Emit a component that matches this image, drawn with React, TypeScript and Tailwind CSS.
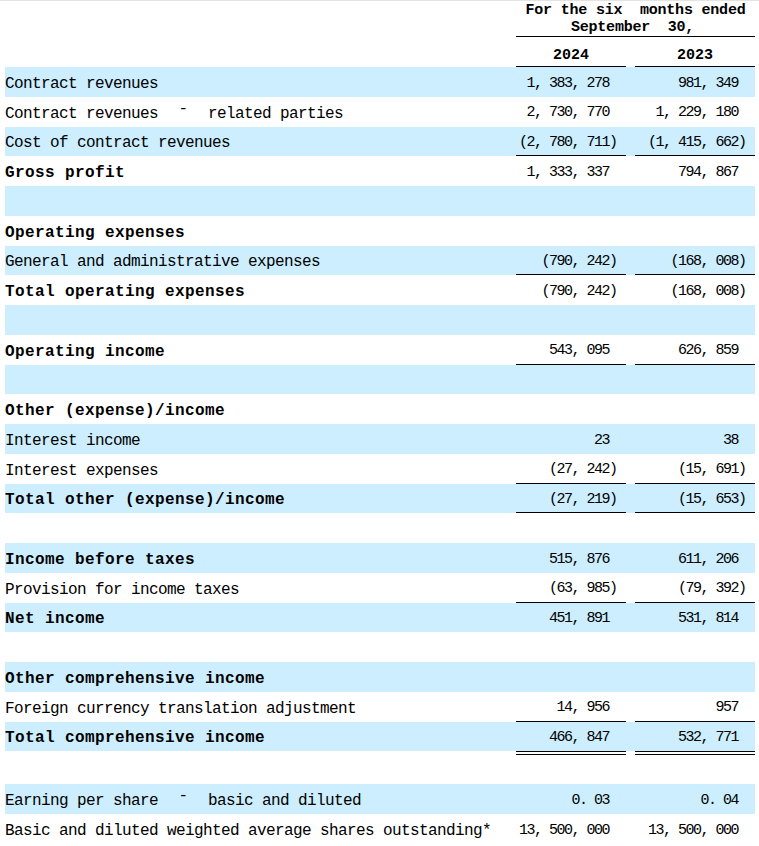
import * as React from "react";

type Row = {
    label?: string;
    bold?: boolean;
    dash?: [string, string];
    a?: string;
    b?: string;
    blue?: boolean;
    line?: "single" | "double";
    h?: string;
};

const rows: Row[] = [
    { label: "Contract revenues", a: "1, 383, 278", b: "981, 349", blue: true },
    { dash: ["Contract revenues", "related parties"], a: "2, 730, 770", b: "1, 229, 180" },
    { label: "Cost of contract revenues", a: "(2, 780, 711)", b: "(1, 415, 662)", blue: true, line: "single" },
    { label: "Gross profit", bold: true, a: "1, 333, 337", b: "794, 867" },
    { blue: true },
    { label: "Operating expenses", bold: true },
    { label: "General and administrative expenses", a: "(790, 242)", b: "(168, 008)", blue: true, line: "single" },
    { label: "Total operating expenses", bold: true, a: "(790, 242)", b: "(168, 008)" },
    { blue: true },
    { label: "Operating income", bold: true, a: "543, 095", b: "626, 859", line: "single" },
    { blue: true },
    { label: "Other (expense)/income", bold: true },
    { label: "Interest income", a: "23", b: "38", blue: true },
    { label: "Interest expenses", a: "(27, 242)", b: "(15, 691)", line: "single" },
    { label: "Total other (expense)/income", bold: true, a: "(27, 219)", b: "(15, 653)", blue: true, line: "single" },
    {},
    { label: "Income before taxes", bold: true, a: "515, 876", b: "611, 206", blue: true },
    { label: "Provision for income taxes", a: "(63, 985)", b: "(79, 392)", line: "single" },
    { label: "Net income", bold: true, a: "451, 891", b: "531, 814", blue: true },
    {},
    { label: "Other comprehensive income", bold: true, blue: true },
    { label: "Foreign currency translation adjustment", a: "14, 956", b: "957", line: "single" },
    { label: "Total comprehensive income", bold: true, a: "466, 847", b: "532, 771", blue: true, line: "double" },
    { h: "h-[33px]" },
    { dash: ["Earning per share", "basic and diluted"], a: "0. 03", b: "0. 04", blue: true },
    { label: "Basic and diluted weighted average shares outstanding*", a: "13, 500, 000", b: "13, 500, 000" },
];

const mono = "font-['Liberation_Mono',monospace]";

const Num = ({ v }: { v?: string }) => {
    if (!v) return null;
    const neg = v.startsWith("(");
    const body = neg ? v.slice(0, -1) : v;
    return (
        <span className={`${mono} text-[15px] tracking-[-1.5px] flex justify-end pr-[9px]`}>
            <span>{body}</span>
            <span className="w-[8px] text-left">{neg ? ")" : ""}</span>
        </span>
    );
};

const Cell = ({ v, w, line }: { v?: string; w: string; line?: Row["line"] }) => (
    <div className={`${w} h-full relative flex items-center justify-end pt-[4px]`}>
        <div className="w-full">
            <Num v={v} />
        </div>
        {line === "single" && <div className="absolute left-0 right-0 bottom-0 h-px bg-black" />}
        {line === "double" && (
            <div className="absolute left-0 right-0 -bottom-[4px] h-[4px] border-t border-b border-black" />
        )}
    </div>
);

export default function App() {
    return (
        <div className="w-[759px] h-[846px] bg-white text-black overflow-hidden">
            <div className="h-px bg-[#e3e3e3]" />
            <div className="flex pl-[5px]">
                <div className="w-[511px]" />
                <div className="w-[239px] h-[36px] border-b border-black flex flex-col items-center pt-[1px]">
                    <span className={`${mono} text-[15px] font-bold leading-[17px] tracking-[-0.2px] whitespace-pre`}>
                        {"For the six  months ended"}
                    </span>
                    <span className={`${mono} text-[15px] font-bold leading-[17px] tracking-[-0.2px] whitespace-pre pl-[4px] pr-[10px]`}>
                        {"September  30,"}
                    </span>
                </div>
            </div>
            <div className="flex pl-[5px] h-[30px]">
                <div className="w-[511px]" />
                <div className={`${mono} w-[110px] border-b border-black flex items-center justify-center text-[15px] font-bold pt-[9px]`}>
                    2024
                </div>
                <div className="w-[9px]" />
                <div className={`${mono} w-[120px] border-b border-black flex items-center justify-center text-[15px] font-bold pt-[9px]`}>
                    2023
                </div>
            </div>
            <div className="pl-[5px] pr-[4px]">
                {rows.map((r, i) => (
                    <div key={i} className={`flex ${r.h ?? "h-[29.75px]"} ${r.blue ? "bg-[#cceeff]" : ""}`}>
                        <div className="w-[511px] h-full flex items-center pt-[4px]">
                            {r.label && (
                                <span
                                    className={`${mono} whitespace-pre ${
                                        r.bold
                                            ? "font-bold text-[16px] tracking-[0.4px]"
                                            : "text-[16px] tracking-[-0.6px]"
                                    }`}
                                >
                                    {r.label}
                                </span>
                            )}
                            {r.dash && (
                                <span className={`${mono} whitespace-pre text-[16px] tracking-[-0.6px]`}>
                                    {r.dash[0]}
                                    <span className="inline-block w-[50px] text-center relative -top-[5px]">-</span>
                                    {r.dash[1]}
                                </span>
                            )}
                        </div>
                        <Cell v={r.a} w="w-[110px]" line={r.line} />
                        <div className="w-[9px]" />
                        <Cell v={r.b} w="w-[120px]" line={r.line} />
                    </div>
                ))}
            </div>
        </div>
    );
}
